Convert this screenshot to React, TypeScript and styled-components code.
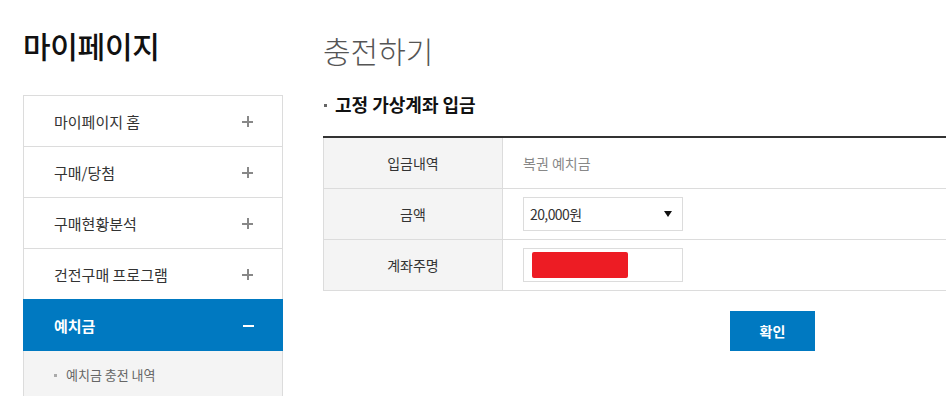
import React from "react";
import styled, { createGlobalStyle } from "styled-components";

const Global = createGlobalStyle`
  html, body { margin: 0; padding: 0; background: #fff; overflow: hidden; }
  body { font-family: "Noto Sans CJK KR", "Noto Sans", sans-serif; color: #333; }
  * { box-sizing: border-box; }
`;

const Page = styled.div`
  display: flex;
  gap: 40px;
  padding-left: 23px;
  width: 1300px;
`;

const Side = styled.aside`
  width: 260px;
  flex: none;
`;

const SideTitle = styled.h1`
  margin: 0;
  padding-top: 25px;
  height: 95px;
  font-size: 30px;
  font-weight: 500;
  color: #111;
  letter-spacing: -0.3px;
  line-height: 40px;
`;

const Menu = styled.ul`
  list-style: none;
  margin: 0;
  padding: 0;
  border: 1px solid #dcdcdc;
  border-bottom: none;
`;

const MenuItem = styled.li<{ $active?: boolean }>`
  display: flex;
  align-items: center;
  justify-content: space-between;
  height: ${(p) => (p.$active ? "52px" : "51px")};
  padding: 0 29px 0 30px;
  border-bottom: ${(p) => (p.$active ? "none" : "1px solid #dcdcdc")};
  margin: ${(p) => (p.$active ? "-1px -1px 0 -1px" : "0")};
  background: ${(p) => (p.$active ? "#0079c1" : "#fff")};
  color: ${(p) => (p.$active ? "#fff" : "#333")};
  font-size: 15px;
  font-weight: ${(p) => (p.$active ? 700 : 400)};
  padding-left: ${(p) => (p.$active ? "31px" : "30px")};
`;

const Sign = styled.span<{ $minus?: boolean }>`
  position: relative;
  width: 11px;
  height: 11px;
  &::before, &::after {
    content: "";
    position: absolute;
    background: ${(p) => (p.$minus ? "#fff" : "#888")};
  }
  &::before { left: 0; right: 0; top: 5px; height: 2px; }
  &::after {
    display: ${(p) => (p.$minus ? "none" : "block")};
    top: 0; bottom: 0; left: 4.5px; width: 2px;
  }
`;

const SubMenu = styled.div`
  background: #f4f4f4;
  height: 60px;
  border-left: 1px solid #dcdcdc;
  border-right: 1px solid #dcdcdc;
  padding: 14px 0 0 30px;
  font-size: 13px;
  color: #666;
  display: flex;
  align-items: flex-start;
  gap: 9px;
  line-height: 20px;
  &::before {
    content: "";
    width: 3px;
    height: 3px;
    background: #aaa;
    margin-top: 9px;
  }
`;

const Main = styled.main`
  width: 899px;
  flex: none;
`;

const PageTitle = styled.h2`
  margin: 0;
  padding-top: 28px;
  height: 92px;
  font-size: 30px;
  font-weight: 300;
  color: #555;
  line-height: 44px;
`;

const SectionTitle = styled.h3`
  margin: 0;
  height: 44px;
  display: flex;
  align-items: flex-start;
  gap: 8px;
  font-size: 18px;
  font-weight: 700;
  color: #111;
  line-height: 24px;
  &::before {
    content: "";
    width: 3px;
    height: 3px;
    background: #666;
    margin-top: 12px;
    margin-left: 1px;
  }
`;

const Table = styled.div`
  border-top: 2px solid #333;
`;

const Row = styled.div`
  display: grid;
  grid-template-columns: 180px 1fr;
  height: 51px;
  border-bottom: 1px solid #dcdcdc;
`;

const Th = styled.div`
  background: #f4f4f4;
  border-left: 1px solid #dcdcdc;
  border-right: 1px solid #dcdcdc;
  display: flex;
  align-items: center;
  justify-content: center;
  font-size: 14px;
  color: #333;
`;

const Td = styled.div`
  display: flex;
  align-items: center;
  padding-left: 20px;
  font-size: 14px;
`;

const Muted = styled.span`
  color: #888;
  font-size: 14px;
`;

const Select = styled.div`
  width: 160px;
  height: 34px;
  border: 1px solid #dcdcdc;
  display: flex;
  align-items: center;
  justify-content: space-between;
  padding: 0 10px 0 6px;
  font-size: 14px;
  letter-spacing: -0.6px;
  color: #333;
`;

const Arrow = styled.span`
  width: 0;
  height: 0;
  border-left: 4px solid transparent;
  border-right: 4px solid transparent;
  border-top: 6px solid #111;
`;

const InputBox = styled.div`
  width: 160px;
  height: 34px;
  border: 1px solid #dcdcdc;
  padding: 3px 8px;
`;

const Masked = styled.div`
  width: 96px;
  height: 26px;
  background: #ed1c24;
  border-radius: 2px;
`;

const Actions = styled.div`
  display: flex;
  justify-content: center;
  padding-top: 20px;
`;

const Button = styled.button`
  width: 85px;
  height: 40px;
  border: none;
  background: #0079c1;
  color: #fff;
  font-family: inherit;
  font-size: 14px;
  font-weight: 700;
`;

export default function App() {
  const items = ["마이페이지 홈", "구매/당첨", "구매현황분석", "건전구매 프로그램"];
  return (
    <>
      <Global />
      <Page>
        <Side>
          <SideTitle>마이페이지</SideTitle>
          <Menu>
            {items.map((t) => (
              <MenuItem key={t}>
                {t}
                <Sign />
              </MenuItem>
            ))}
            <MenuItem $active>
              예치금
              <Sign $minus />
            </MenuItem>
          </Menu>
          <SubMenu>예치금 충전 내역</SubMenu>
        </Side>
        <Main>
          <PageTitle>충전하기</PageTitle>
          <SectionTitle>고정 가상계좌 입금</SectionTitle>
          <Table>
            <Row>
              <Th>입금내역</Th>
              <Td>
                <Muted>복권 예치금</Muted>
              </Td>
            </Row>
            <Row>
              <Th>금액</Th>
              <Td>
                <Select>
                  20,000원
                  <Arrow />
                </Select>
              </Td>
            </Row>
            <Row>
              <Th>계좌주명</Th>
              <Td>
                <InputBox>
                  <Masked />
                </InputBox>
              </Td>
            </Row>
          </Table>
          <Actions>
            <Button>확인</Button>
          </Actions>
        </Main>
      </Page>
    </>
  );
}
